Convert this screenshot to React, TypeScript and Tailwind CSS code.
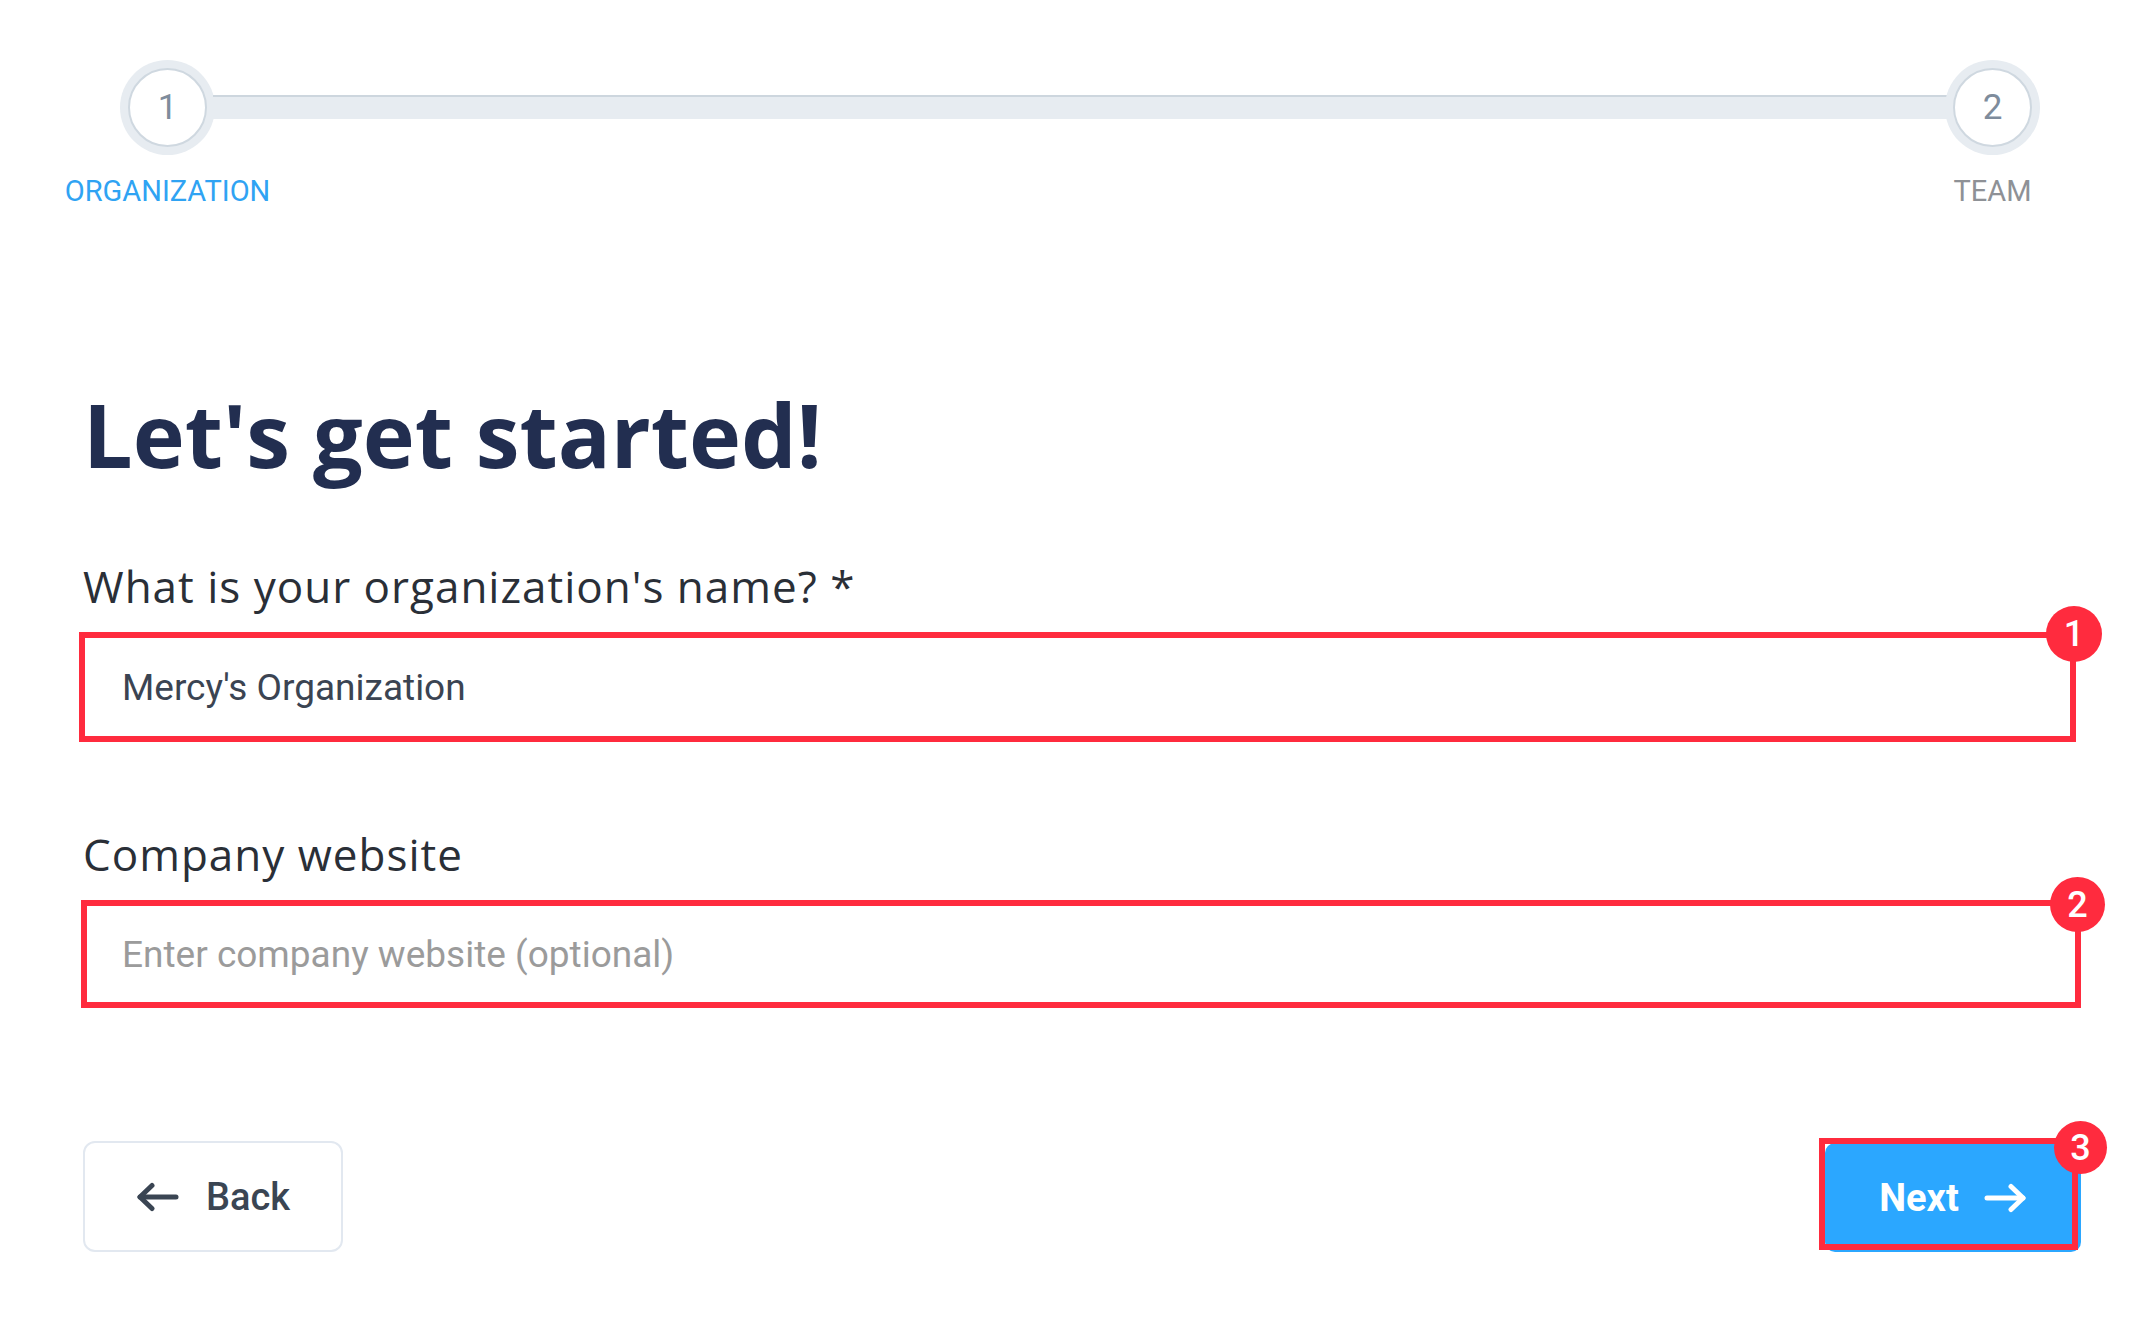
import { useState } from 'react'

const RED = 'border-[#ff2b3e]'

function StepCircle({ n }: { n: number }) {
  return (
    <div className="w-[95px] h-[95px] shrink-0 rounded-full bg-[#e7ecf1] flex items-center justify-center">
      <div className="w-[79px] h-[79px] rounded-full bg-white border-2 border-[#cfd8e0] flex items-center justify-center">
        <span className="text-[35px] leading-none text-[#7e8c9c] font-['Roboto',sans-serif]">{n}</span>
      </div>
    </div>
  )
}

function Badge({ n, className }: { n: number; className: string }) {
  return (
    <div
      className={`absolute rounded-full bg-[#ff2b3e] text-white flex items-center justify-center text-[36px] leading-none font-medium font-['Roboto',sans-serif] ${className}`}
    >
      {n}
    </div>
  )
}

function Arrow({ dir }: { dir: 'left' | 'right' }) {
  return (
    <svg width="44" height="30" viewBox="0 0 44 30" fill="none" stroke="currentColor" strokeWidth="5" strokeLinecap="round" strokeLinejoin="round">
      {dir === 'left' ? (
        <>
          <path d="M4 15H40" />
          <path d="M16 3.5L4 15L16 26.5" />
        </>
      ) : (
        <>
          <path d="M4 15H40" />
          <path d="M28 3.5L40 15L28 26.5" />
        </>
      )}
    </svg>
  )
}

export default function App() {
  const [orgName, setOrgName] = useState("Mercy's Organization")
  const [website, setWebsite] = useState('')

  return (
    <div className="min-h-screen w-full bg-white font-['Roboto',sans-serif]">
      {/* stepper */}
      <div className="pt-[60px] pl-[120px] pr-[115px] flex items-start">
        <div className="w-[95px] shrink-0 flex flex-col items-center">
          <StepCircle n={1} />
          <span className="mt-[22px] text-[29px] leading-none whitespace-nowrap text-[#2fa3f3]">ORGANIZATION</span>
        </div>
        <div className="flex-1 mt-[35px] h-[24px] bg-[#e7ecf1] border-t-2 border-[#cdd6de] -mx-[2px]" />
        <div className="w-[95px] shrink-0 flex flex-col items-center">
          <StepCircle n={2} />
          <span className="mt-[22px] text-[29px] leading-none whitespace-nowrap text-[#8e9196]">TEAM</span>
        </div>
      </div>

      <div className="px-[79px]">
        <h1 className="mt-[184px] ml-[4px] text-[88px] leading-none font-bold text-[#222e50] font-['Open_Sans',sans-serif]">
          Let's get started!
        </h1>

        <label className="block mt-[86px] ml-[4px] text-[44px] tracking-[1px] leading-none text-[#2a2f37] font-['Open_Sans',sans-serif]">
          What is your organization's name? *
        </label>
        <div className={`relative mt-[24px] h-[110px] border-[6px] ${RED} bg-white`}>
          <input
            value={orgName}
            onChange={(e) => setOrgName(e.target.value)}
            className="w-full h-full pl-[37px] bg-transparent outline-none text-[37px] text-[#3b4452]"
          />
          <Badge n={1} className="w-[56px] h-[56px] -top-[32px] -right-[32px]" />
        </div>

        <label className="block mt-[90px] ml-[4px] text-[44px] tracking-[1px] leading-none text-[#2a2f37] font-['Open_Sans',sans-serif]">
          Company website
        </label>
        <div className={`relative mt-[24px] ml-[2px] -mr-[5px] h-[108px] border-[6px] ${RED} bg-white`}>
          <input
            value={website}
            onChange={(e) => setWebsite(e.target.value)}
            placeholder="Enter company website (optional)"
            className="w-full h-full pl-[35px] bg-transparent outline-none text-[37px] text-[#3b4452] placeholder:text-[#9b9b9b]"
          />
          <Badge n={2} className="w-[55px] h-[55px] -top-[29px] -right-[30px]" />
        </div>

        <div className="mt-[133px] flex items-start justify-between">
          <button className="ml-[4px] w-[260px] h-[111px] rounded-[12px] border-2 border-[#e2e8f0] bg-white flex items-center justify-center gap-[26px] text-[#3a4553]">
            <Arrow dir="left" />
            <span className="text-[38px] font-medium leading-none">Back</span>
          </button>
          <div className="relative mt-[2px] -mr-[5px]">
            <button className="w-[256px] h-[109px] rounded-[10px] bg-[#2ba7ff] flex items-center justify-center gap-[24px] text-white">
              <span className="text-[38px] font-bold leading-none">Next</span>
              <Arrow dir="right" />
            </button>
            <div className={`absolute -left-[6px] -top-[5px] right-[3px] bottom-[2px] border-[6px] ${RED} pointer-events-none`} />
            <Badge n={3} className="w-[53px] h-[53px] -top-[22px] -right-[26px]" />
          </div>
        </div>
      </div>
    </div>
  )
}
